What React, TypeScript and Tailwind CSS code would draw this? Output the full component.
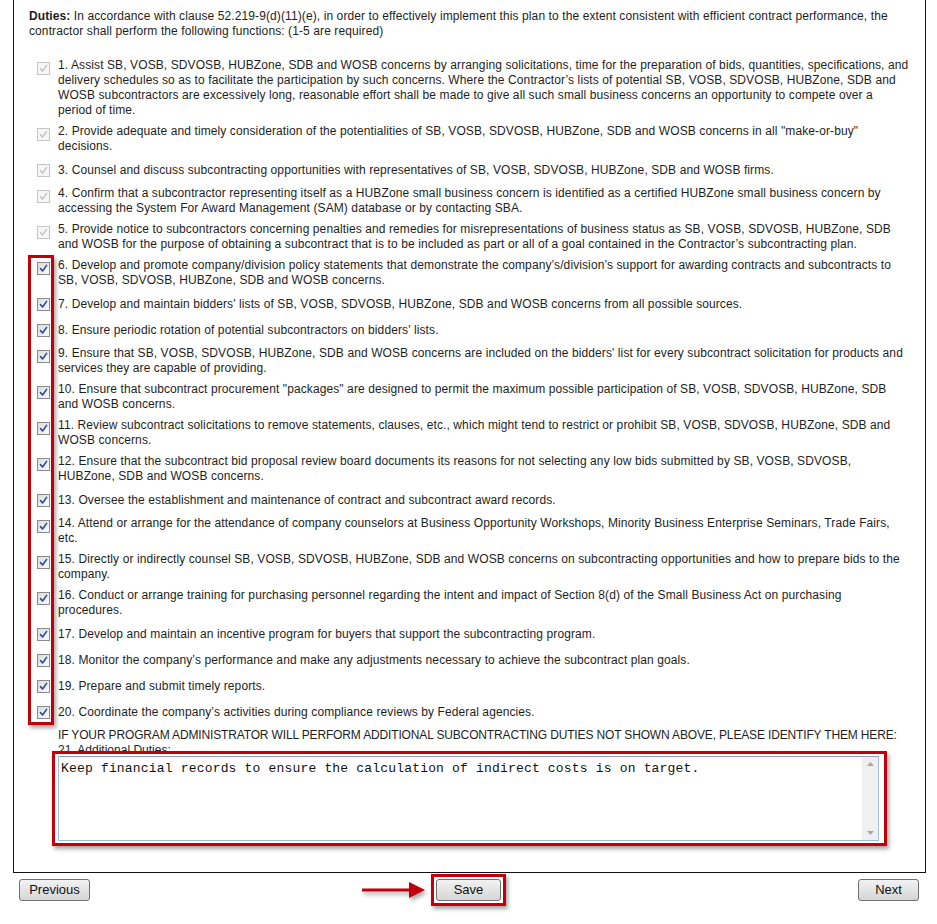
import React from 'react';

type Item = { n: number; lines: string[]; locked: boolean };

const items: Item[] = [
  { n: 1, locked: true, lines: [
    '1. Assist SB, VOSB, SDVOSB, HUBZone, SDB and WOSB concerns by arranging solicitations, time for the preparation of bids, quantities, specifications, and',
    'delivery schedules so as to facilitate the participation by such concerns. Where the Contractor’s lists of potential SB, VOSB, SDVOSB, HUBZone, SDB and',
    'WOSB subcontractors are excessively long, reasonable effort shall be made to give all such small business concerns an opportunity to compete over a',
    'period of time.',
  ] },
  { n: 2, locked: true, lines: [
    '2. Provide adequate and timely consideration of the potentialities of SB, VOSB, SDVOSB, HUBZone, SDB and WOSB concerns in all "make-or-buy"',
    'decisions.',
  ] },
  { n: 3, locked: true, lines: [
    '3. Counsel and discuss subcontracting opportunities with representatives of SB, VOSB, SDVOSB, HUBZone, SDB and WOSB firms.',
  ] },
  { n: 4, locked: true, lines: [
    '4. Confirm that a subcontractor representing itself as a HUBZone small business concern is identified as a certified HUBZone small business concern by',
    'accessing the System For Award Management (SAM) database or by contacting SBA.',
  ] },
  { n: 5, locked: true, lines: [
    '5. Provide notice to subcontractors concerning penalties and remedies for misrepresentations of business status as SB, VOSB, SDVOSB, HUBZone, SDB',
    'and WOSB for the purpose of obtaining a subcontract that is to be included as part or all of a goal contained in the Contractor’s subcontracting plan.',
  ] },
  { n: 6, locked: false, lines: [
    '6. Develop and promote company/division policy statements that demonstrate the company’s/division’s support for awarding contracts and subcontracts to',
    'SB, VOSB, SDVOSB, HUBZone, SDB and WOSB concerns.',
  ] },
  { n: 7, locked: false, lines: [
    "7. Develop and maintain bidders' lists of SB, VOSB, SDVOSB, HUBZone, SDB and WOSB concerns from all possible sources.",
  ] },
  { n: 8, locked: false, lines: [
    "8. Ensure periodic rotation of potential subcontractors on bidders' lists.",
  ] },
  { n: 9, locked: false, lines: [
    "9. Ensure that SB, VOSB, SDVOSB, HUBZone, SDB and WOSB concerns are included on the bidders' list for every subcontract solicitation for products and",
    'services they are capable of providing.',
  ] },
  { n: 10, locked: false, lines: [
    '10. Ensure that subcontract procurement "packages" are designed to permit the maximum possible participation of SB, VOSB, SDVOSB, HUBZone, SDB',
    'and WOSB concerns.',
  ] },
  { n: 11, locked: false, lines: [
    '11. Review subcontract solicitations to remove statements, clauses, etc., which might tend to restrict or prohibit SB, VOSB, SDVOSB, HUBZone, SDB and',
    'WOSB concerns.',
  ] },
  { n: 12, locked: false, lines: [
    '12. Ensure that the subcontract bid proposal review board documents its reasons for not selecting any low bids submitted by SB, VOSB, SDVOSB,',
    'HUBZone, SDB and WOSB concerns.',
  ] },
  { n: 13, locked: false, lines: [
    '13. Oversee the establishment and maintenance of contract and subcontract award records.',
  ] },
  { n: 14, locked: false, lines: [
    '14. Attend or arrange for the attendance of company counselors at Business Opportunity Workshops, Minority Business Enterprise Seminars, Trade Fairs,',
    'etc.',
  ] },
  { n: 15, locked: false, lines: [
    '15. Directly or indirectly counsel SB, VOSB, SDVOSB, HUBZone, SDB and WOSB concerns on subcontracting opportunities and how to prepare bids to the',
    'company.',
  ] },
  { n: 16, locked: false, lines: [
    '16. Conduct or arrange training for purchasing personnel regarding the intent and impact of Section 8(d) of the Small Business Act on purchasing',
    'procedures.',
  ] },
  { n: 17, locked: false, lines: [
    '17. Develop and maintain an incentive program for buyers that support the subcontracting program.',
  ] },
  { n: 18, locked: false, lines: [
    '18. Monitor the company’s performance and make any adjustments necessary to achieve the subcontract plan goals.',
  ] },
  { n: 19, locked: false, lines: ['19. Prepare and submit timely reports.'] },
  { n: 20, locked: false, lines: [
    '20. Coordinate the company’s activities during compliance reviews by Federal agencies.',
  ] },
];

function Box({ locked }: { locked: boolean }) {
  return (
    <span
      className={`flex h-[13px] w-[13px] items-center justify-center border ${
        locked ? 'border-[#c5c5c5] bg-[#f6f6f6]' : 'border-[#8a8a8a] bg-gradient-to-br from-[#dcdcdc] to-[#fafafa]'
      }`}
    >
      <svg width="9" height="9" viewBox="0 0 9 9">
        <path
          d="M1.5 4.6 L3.6 7 L7.6 1.4"
          fill="none"
          stroke={locked ? '#b9b9b9' : '#2d4f9e'}
          strokeWidth={locked ? 1.2 : 1.6}
          strokeLinecap="round"
          strokeLinejoin="round"
        />
      </svg>
    </span>
  );
}

function Row({ item }: { item: Item }) {
  return (
    <div className="flex py-[3px]">
      <div className="flex h-[20px] w-[22px] shrink-0 items-center self-start pl-[1px]">
        <Box locked={item.locked} />
      </div>
      <div className="self-center whitespace-nowrap tracking-[0.1px]">
        {item.lines.map((l, i) => (
          <div key={i}>{l}</div>
        ))}
      </div>
    </div>
  );
}

function Btn({ label, w }: { label: string; w: string }) {
  return (
    <button
      className={`${w} h-[22px] rounded-[3px] border border-[#707070] bg-gradient-to-b from-[#f2f2f2] to-[#d6d6d6] text-[13px] leading-[20px] text-[#111]`}
    >
      {label}
    </button>
  );
}

export default function App() {
  const shadow = 'shadow-[2px_3px_4px_rgba(0,0,0,0.35)]';
  return (
    <div
      className="min-h-[924px] w-[937px] bg-white text-[12px] leading-[15px] text-[#1e1e1e]"
      style={{ fontFamily: '"Liberation Sans", Arial, sans-serif' }}
    >
      <div className="ml-[13px] w-[913px] border-x border-b border-[#111] pb-[31px] pl-[15px] pr-[10px] pt-[9px]">
        <p className="whitespace-nowrap tracking-[0.1px]">
          <b>Duties:</b> In accordance with clause 52.219-9(d)(11)(e), in order to effectively implement this plan to the extent consistent with efficient contract performance, the
          <br />
          contractor shall perform the following functions: (1-5 are required)
        </p>

        <div className="mt-[16px] pl-[7px]">
          {items.slice(0, 5).map((it) => (
            <Row key={it.n} item={it} />
          ))}
          <div className="relative">
            <div className={`pointer-events-none absolute -left-[8px] top-0 bottom-0 w-[26px] border-[3px] border-[#c2000b] ${shadow}`} />
            {items.slice(5).map((it) => (
              <Row key={it.n} item={it} />
            ))}
          </div>

          <div className="mt-[3px] pl-[22px]">
            <div className="whitespace-nowrap tracking-[-0.15px]">
              IF YOUR PROGRAM ADMINISTRATOR WILL PERFORM ADDITIONAL SUBCONTRACTING DUTIES NOT SHOWN ABOVE, PLEASE IDENTIFY THEM HERE:
            </div>
            <div>21. Additional Duties:</div>
            <div className="relative -mt-[2px] w-[821px]">
              <div className={`absolute -left-[6px] -right-[8px] -top-[5px] -bottom-[5px] border-[3px] border-[#c2000b] bg-white ${shadow}`} />
              <div className="relative flex h-[85px] border border-[#9fbfd9] border-t-[#8aa4bd] bg-white">
                <div
                  className="flex-1 px-[2px] pt-[4px] text-[13px] leading-[16px] tracking-[0.18px] text-[#111]"
                  style={{ fontFamily: '"Liberation Mono", "Courier New", monospace' }}
                >
                  Keep financial records to ensure the calculation of indirect costs is on target.
                </div>
                <div className="flex w-[16px] flex-col items-center justify-between bg-[#f0f0f0] py-[5px]">
                  <svg width="7" height="4" viewBox="0 0 7 4"><path d="M0 4 L3.5 0 L7 4 Z" fill="#a6a6a6" /></svg>
                  <svg width="7" height="4" viewBox="0 0 7 4"><path d="M0 0 L3.5 4 L7 0 Z" fill="#a6a6a6" /></svg>
                </div>
              </div>
            </div>
          </div>
        </div>
      </div>

      <div className="mx-[18px] mt-[6px] grid grid-cols-[1fr_auto_1fr] items-start">
        <div className="pl-[1px]">
          <Btn label="Previous" w="w-[71px]" />
        </div>
        <div className="relative -mt-[5px] flex items-center">
          <svg className="absolute -left-[70px] top-[5px]" width="70" height="22" viewBox="0 0 70 22" style={{ filter: 'drop-shadow(2px 3px 2px rgba(0,0,0,0.35))' }}>
            <path d="M1 9.5 H48 V3 L64 11 L48 19 V12.5 H1 Z" fill="#c2000b" />
          </svg>
          <div className={`border-[3px] border-[#c2000b] p-[2px] ${shadow}`}>
            <Btn label="Save" w="w-[65px]" />
          </div>
        </div>
        <div className="flex justify-end">
          <Btn label="Next" w="w-[61px]" />
        </div>
      </div>
    </div>
  );
}
